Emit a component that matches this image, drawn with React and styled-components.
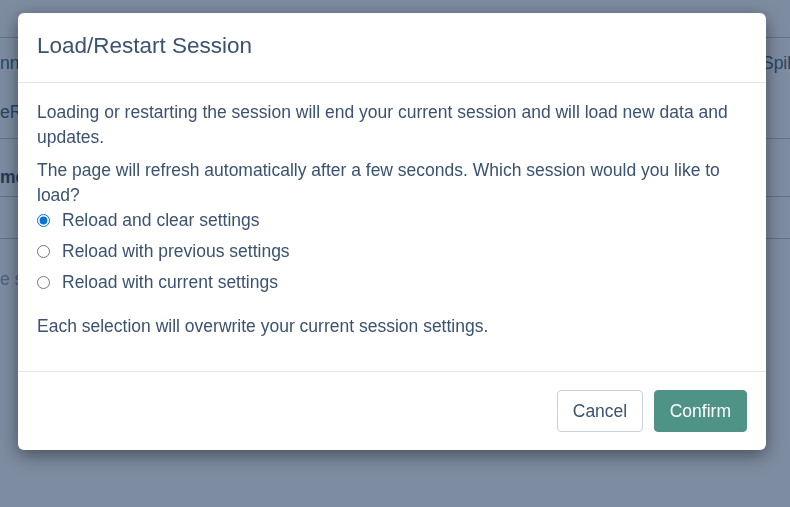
import React, { useState } from "react";
import styled, { createGlobalStyle } from "styled-components";

const GlobalStyle = createGlobalStyle`
  html, body {
    margin: 0;
    padding: 0;
    background: #ffffff;
    font-family: "Liberation Sans", Arial, sans-serif;
    overflow: hidden;
  }
`;

const Page = styled.div`
  width: 790px;
  height: 507px;
  background: #ffffff;
  padding-top: 37px;
  box-sizing: border-box;
  overflow: hidden;
`;

const PageRow = styled.div`
  display: flex;
  justify-content: space-between;
  height: ${(p) => p.$height}px;
  border-top: 1px solid #b4bcc6;
  box-sizing: border-box;
`;

const PageCell = styled.div`
  display: flex;
  flex-direction: column;
  gap: 28px;
  padding-top: ${(p) => p.$top || 14}px;
  margin-right: ${(p) => (p.$end ? "-6px" : "0")};
  font-size: 17.5px;
  font-weight: ${(p) => (p.$bold ? 700 : 400)};
  color: ${(p) => p.$color || "#254f68"};
  white-space: nowrap;
`;

const Backdrop = styled.div`
  position: fixed;
  inset: 0;
  background: rgba(40, 64, 98, 0.6);
`;

const Dialog = styled.div`
  width: 748px;
  margin: 13px 0 0 18px;
  background: #ffffff;
  border-radius: 6px;
  box-shadow: 0 5px 18px rgba(0, 0, 0, 0.45);
  color: #3b5270;
`;

const Header = styled.div`
  height: 70px;
  display: flex;
  align-items: center;
  padding: 0 19px 3px;
  box-sizing: border-box;
  border-bottom: 1px solid #e3e6ea;
`;

const Title = styled.h4`
  margin: 0;
  font-size: 22.5px;
  font-weight: 400;
  color: #3b5270;
`;

const Body = styled.div`
  padding: 17px 19px 32px;
  font-size: 17.5px;
  line-height: 25px;
`;

const Text = styled.p`
  margin: ${(p) => p.$margin || "0"};
`;

const Options = styled.div`
  display: flex;
  flex-direction: column;
  margin-top: -3px;
`;

const Option = styled.label`
  display: flex;
  align-items: center;
  height: 31px;
  gap: 12px;
  cursor: pointer;
`;

const Radio = styled.input`
  width: 13px;
  height: 13px;
  margin: 0;
  accent-color: #0a72d6;
`;

const Footer = styled.div`
  display: flex;
  justify-content: flex-end;
  gap: 11px;
  padding: 18px 19px;
  border-top: 1px solid #e3e6ea;
`;

const Button = styled.button`
  height: 42px;
  padding: 0 ${(p) => (p.$primary ? 15 : 14.5)}px;
  border-radius: 4px;
  font-family: "Liberation Sans", Arial, sans-serif;
  font-size: 17.5px;
  cursor: pointer;
  border: 1px solid ${(p) => (p.$primary ? "#4e9385" : "#c9d0d9")};
  background: ${(p) => (p.$primary ? "#4e9385" : "#ffffff")};
  color: ${(p) => (p.$primary ? "#ffffff" : "#3b5270")};
`;

const options = [
  "Reload and clear settings",
  "Reload with previous settings",
  "Reload with current settings",
];

export default function App() {
  const [choice, setChoice] = useState(0);

  return (
    <React.Fragment>
      <GlobalStyle />
      <Page>
        <PageRow $height={101}>
          <PageCell $top={15}>
            <span>nn</span>
            <span>eR</span>
          </PageCell>
          <PageCell $top={15} $end>
            <span>Spik</span>
          </PageCell>
        </PageRow>
        <PageRow $height={58}>
          <PageCell $top={28} $bold $color="#1d3347">
            <span>me</span>
          </PageCell>
        </PageRow>
        <PageRow $height={42} />
        <PageRow $height={200}>
          <PageCell $top={30} $color="#8a96a3">
            <span>e s</span>
          </PageCell>
        </PageRow>
      </Page>
      <Backdrop>
        <Dialog>
          <Header>
            <Title>Load/Restart Session</Title>
          </Header>
          <Body>
            <Text>
              Loading or restarting the session will end your current session
              and will load new data and updates.
            </Text>
            <Text $margin="8px 0 0">
              The page will refresh automatically after a few seconds. Which
              session would you like to load?
            </Text>
            <Options>
              {options.map((label, i) => (
                <Option key={label}>
                  <Radio
                    type="radio"
                    name="session"
                    checked={choice === i}
                    onChange={() => setChoice(i)}
                  />
                  {label}
                </Option>
              ))}
            </Options>
            <Text $margin="16px 0 0">
              Each selection will overwrite your current session settings.
            </Text>
          </Body>
          <Footer>
            <Button>Cancel</Button>
            <Button $primary>Confirm</Button>
          </Footer>
        </Dialog>
      </Backdrop>
    </React.Fragment>
  );
}
